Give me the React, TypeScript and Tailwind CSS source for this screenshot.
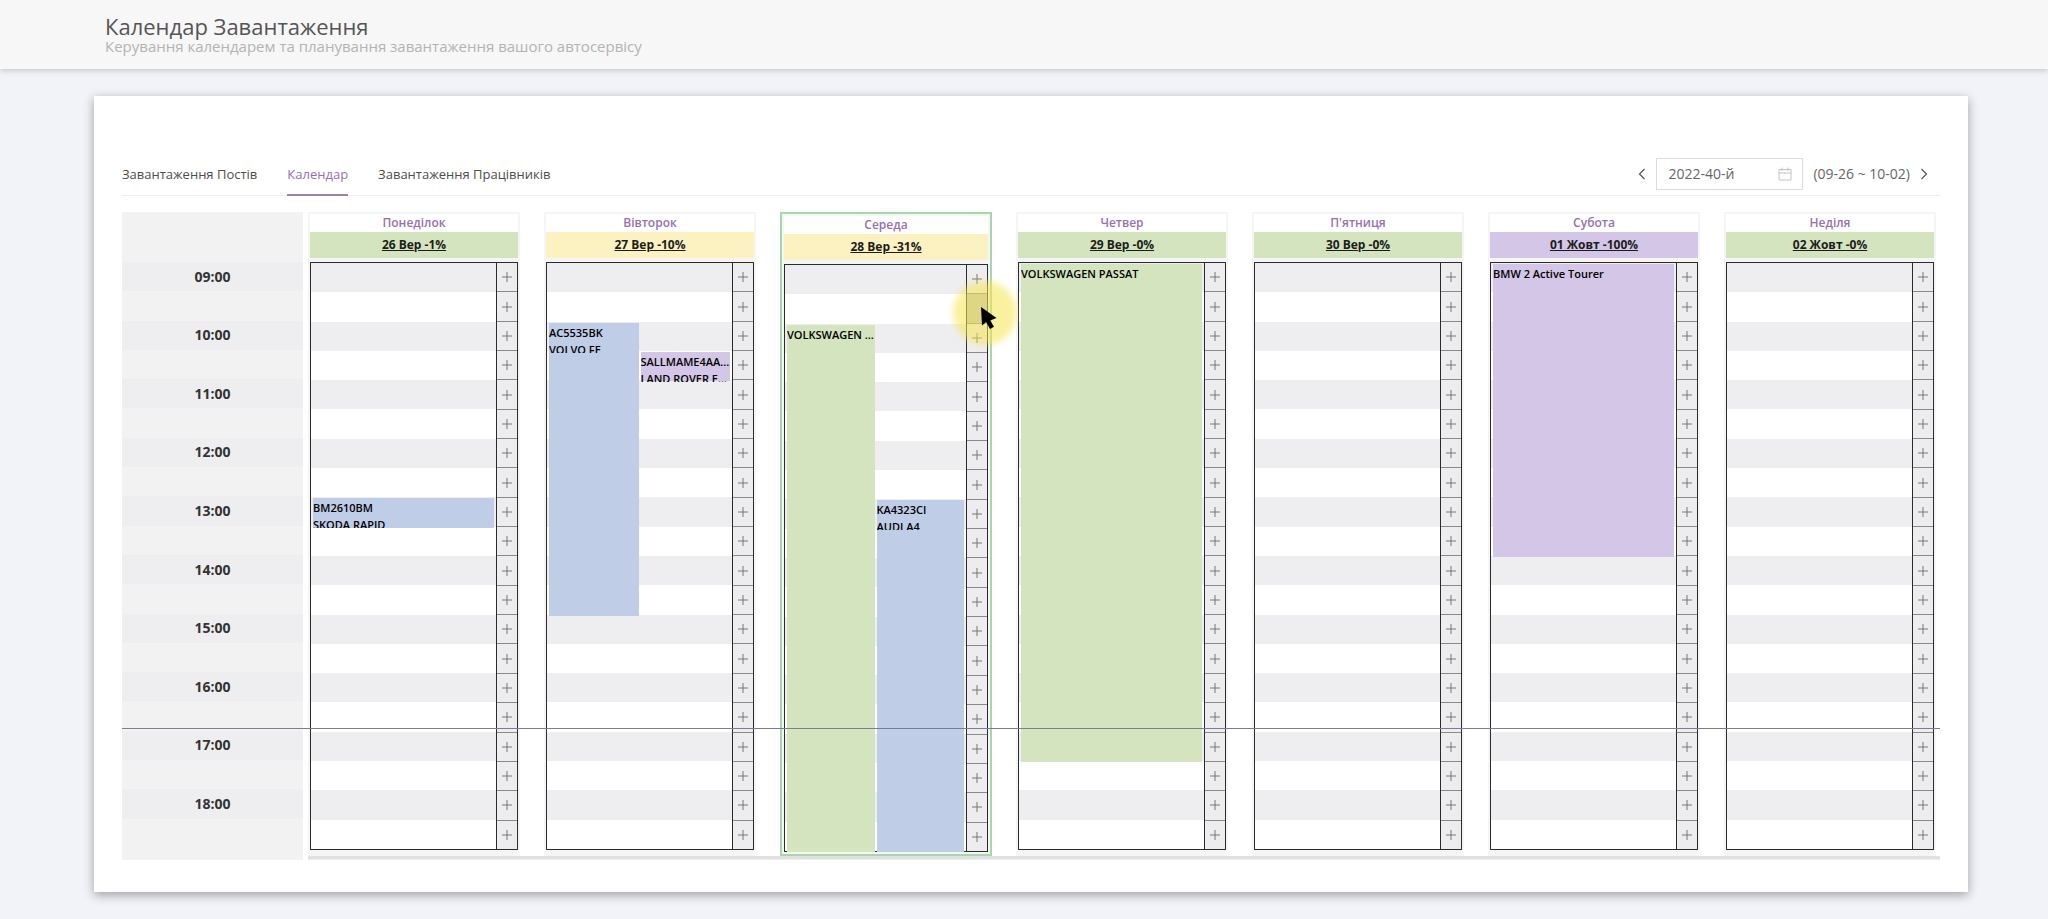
import { CSSProperties, ReactNode } from 'react';

type Tone = 'green' | 'yellow' | 'blue' | 'purple';

interface Booking {
  lines: string[];
  start: number;
  span: number;
  lane: number;
  lanes: number;
  tone: Tone;
}

interface Day {
  name: string;
  label: string;
  tone: Tone;
  today?: boolean;
  bookings: Booking[];
}

const TONES: Record<Tone, string> = {
  green: 'bg-[#d3e4be]',
  yellow: 'bg-[#fcf1c0]',
  blue: 'bg-[#bfcde7]',
  purple: 'bg-[#d4c6e6]',
};

// half-hour slots, 09:00 to 19:00
const SLOTS = Array.from({ length: 20 }, (_, i) => i);
const HOVERED_SLOT = 1;

const DAYS: Day[] = [
  {
    name: 'Понеділок',
    label: '26 Вер -1%',
    tone: 'green',
    bookings: [{ lines: ['BM2610BM', 'SKODA RAPID'], start: 8, span: 1, lane: 0, lanes: 1, tone: 'blue' }],
  },
  {
    name: 'Вівторок',
    label: '27 Вер -10%',
    tone: 'yellow',
    bookings: [
      { lines: ['AC5535BK', 'VOLVO FE'], start: 2, span: 10, lane: 0, lanes: 2, tone: 'blue' },
      { lines: ['SALLMAME4AA...', 'LAND ROVER E...'], start: 3, span: 1, lane: 1, lanes: 2, tone: 'purple' },
    ],
  },
  {
    name: 'Середа',
    label: '28 Вер -31%',
    tone: 'yellow',
    today: true,
    bookings: [
      { lines: ['VOLKSWAGEN ...'], start: 2, span: 18, lane: 0, lanes: 2, tone: 'green' },
      { lines: ['KA4323CI', 'AUDI A4'], start: 8, span: 12, lane: 1, lanes: 2, tone: 'blue' },
    ],
  },
  {
    name: 'Четвер',
    label: '29 Вер -0%',
    tone: 'green',
    bookings: [{ lines: ['VOLKSWAGEN PASSAT'], start: 0, span: 17, lane: 0, lanes: 1, tone: 'green' }],
  },
  { name: 'П\'ятниця', label: '30 Вер -0%', tone: 'green', bookings: [] },
  {
    name: 'Субота',
    label: '01 Жовт -100%',
    tone: 'purple',
    bookings: [{ lines: ['BMW 2 Active Tourer'], start: 0, span: 10, lane: 0, lanes: 1, tone: 'purple' }],
  },
  { name: 'Неділя', label: '02 Жовт -0%', tone: 'green', bookings: [] },
];

function Chevron({ d }: { d: string }) {
  return (
    <svg viewBox="0 0 8 12" className="h-3 w-2" fill="none" stroke="#555" strokeWidth="1.2">
      <path d={d} />
    </svg>
  );
}

function Tab({ active, children }: { active?: boolean; children: ReactNode }) {
  return (
    <button
      role="tab"
      aria-selected={!!active}
      className={
        active
          ? '-mb-px border-b-2 border-[#9b7fb5] pb-2.5 text-[#9571b3]'
          : '-mb-px border-b-2 border-transparent pb-2.5 text-[#4d4d4d]'
      }
    >
      {children}
    </button>
  );
}

function Pointer() {
  return (
    <div className="pointer-events-none absolute top-1/2 left-1/2 z-20">
      <div className="absolute -top-7 -left-6 size-16 rounded-full bg-[#f6e650]/55 blur-[3px]" />
      <svg viewBox="0 0 16 22" className="absolute -top-0.5 left-1 h-[22px] w-4" fill="#000">
        <path d="M0 0l1 18.500 4.200-3.500 3.800 7 4-2.200-3.800-6.300 6.300-2.500z" />
      </svg>
    </div>
  );
}

function BookingBlock({ booking }: { booking: Booking }) {
  const style: CSSProperties = {
    top: `${(booking.start / SLOTS.length) * 100}%`,
    height: `${(booking.span / SLOTS.length) * 100}%`,
    left: `${(booking.lane / booking.lanes) * 100}%`,
    width: `${100 / booking.lanes}%`,
  };
  return (
    <div className="absolute px-px" style={style}>
      <div className={`h-full ${TONES[booking.tone]}`}>
        <div className="max-h-[30px] overflow-hidden pt-px text-[11px] leading-[17px] font-semibold text-black">
          {booking.lines.map((line) => (
            <p key={line} className="whitespace-nowrap">
              {line}
            </p>
          ))}
        </div>
      </div>
    </div>
  );
}

function DayColumn({ day }: { day: Day }) {
  return (
    <section
      className={
        day.today
          ? 'min-w-0 border-2 border-[#a9d5ad] bg-[#f5f5f5] p-0.5'
          : 'min-w-0 bg-[#f5f5f5] p-0.5 pb-1.5'
      }
    >
      <h2 className="h-[18px] bg-white text-center text-xs leading-[18px] font-semibold text-[#9571b3]">{day.name}</h2>
      <div className={`mb-1 h-[26px] text-center text-xs leading-[26px] font-bold ${TONES[day.tone]}`}>
        <a href="#" className="text-[#1c1c1c] underline">
          {day.label}
        </a>
      </div>
      <div className="flex h-[588px] border border-[#2b2b2b]">
        <div className="relative min-w-0 flex-1">
          <div className="flex h-full flex-col">
            {SLOTS.map((slot) => (
              <div key={slot} className="flex-1 odd:bg-[#eeeef0] even:bg-white" />
            ))}
          </div>
          <div className="absolute inset-x-px top-px -bottom-px">
            {day.bookings.map((booking) => (
              <BookingBlock key={booking.lines[0]} booking={booking} />
            ))}
          </div>
        </div>
        <div className="flex w-[21px] flex-col border-l border-[#2b2b2b]">
          {SLOTS.map((slot) => {
            const hovered = day.today && slot === HOVERED_SLOT;
            return (
              <div key={slot} className="relative flex flex-1 border-b border-[#8a8a8a] last:border-b-0">
                <button
                  aria-label="Додати"
                  className={
                    hovered
                      ? 'flex flex-1 items-center justify-center bg-[#c4c4c4]'
                      : 'flex flex-1 items-center justify-center bg-[#ededef]'
                  }
                >
                  {!hovered && (
                    <svg viewBox="0 0 10 10" className="size-2.5" stroke="#777" strokeWidth="1">
                      <path d="M5 0v10M0 5h10" />
                    </svg>
                  )}
                </button>
                {hovered && <Pointer />}
              </div>
            );
          })}
        </div>
      </div>
    </section>
  );
}

export default function App() {
  return (
    <div className="min-h-screen bg-[#f2f3f8] font-['Open_Sans','Noto_Sans',sans-serif] text-sm">
      <header className="h-[69px] bg-[#f7f7f7] pt-3.5 pl-[105px] shadow-[0_1px_6px_rgba(0,0,0,0.22)]">
        <h1 className="text-[22px] leading-6 text-[#555]">Календар Завантаження</h1>
        <p className="text-[15px] leading-4 text-[#b3b3b3]">
          Керування календарем та планування завантаження вашого автосервісу
        </p>
      </header>

      <main className="pt-[27px] pr-20 pb-6 pl-[94px]">
        <div className="bg-white px-7 pt-[60px] pb-8 shadow-[0_3px_10px_rgba(0,0,0,0.35)]">
          <div className="flex h-10 items-end justify-between border-b border-[#efefef]">
            <div role="tablist" className="flex gap-[30px] text-[13px]">
              <Tab>Завантаження Постів</Tab>
              <Tab active>Календар</Tab>
              <Tab>Завантаження Працівників</Tab>
            </div>
            <div className="mb-[5px] flex items-center gap-2.5 pr-3 text-[#666]">
              <button aria-label="Попередній тиждень">
                <Chevron d="M6.5 1L1.5 6l5 5" />
              </button>
              <label className="flex h-8 w-[147px] items-center border border-[#dcdcdc] pr-2.5 pl-[11px]">
                <input aria-label="Тиждень" defaultValue="2022-40-й" className="w-full min-w-0 outline-none" />
                <svg viewBox="0 0 14 14" className="size-3.5 shrink-0" fill="none" stroke="#c4c4c4">
                  <path d="M1 2.5h12v10.500H1zM1 6h12M4 0.500v3.500M10 0.500v3.500" />
                </svg>
              </label>
              <span>(09-26 ~ 10-02)</span>
              <button aria-label="Наступний тиждень">
                <Chevron d="M1.500 1l5 5-5 5" />
              </button>
            </div>
          </div>

          <div className="relative mt-4 flex gap-[5px]">
            <div className="flex w-[181px] shrink-0 flex-col bg-[#f2f2f2] pt-[50px] pb-3">
              {SLOTS.map((slot) => (
                <div
                  key={slot}
                  className="flex flex-1 items-center justify-center font-bold text-[#333] odd:bg-[#eeeef0]"
                >
                  {slot % 2 === 0 && `${String(9 + slot / 2).padStart(2, '0')}:00`}
                </div>
              ))}
            </div>
            <div className="min-w-0 flex-1">
              <div className="grid grid-cols-7 gap-6 pr-1">
                {DAYS.map((day) => (
                  <DayColumn key={day.name} day={day} />
                ))}
              </div>
              <div className="h-1 border-b border-[#ececec] bg-[#e0e0e0]" />
            </div>
            <div className="absolute inset-x-0 top-[516px] z-10 h-px bg-[#75818f]" />
          </div>
        </div>
      </main>
    </div>
  );
}
